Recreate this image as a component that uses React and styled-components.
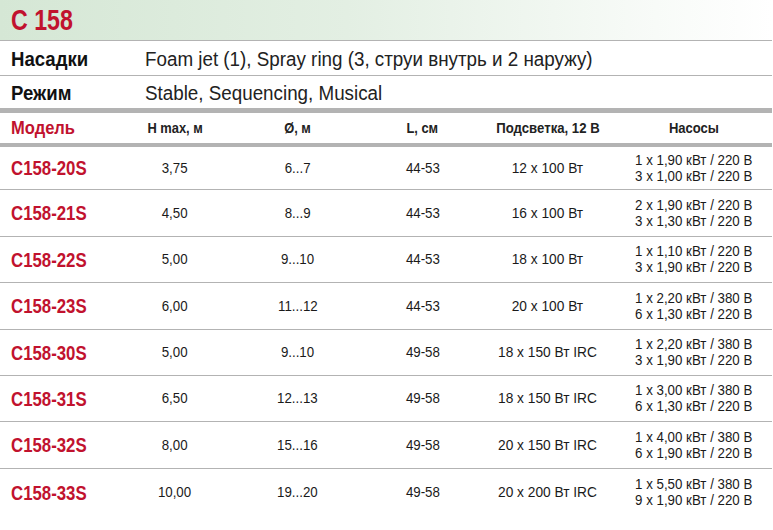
import React from 'react';
import styled, { createGlobalStyle } from 'styled-components';

const GlobalStyle = createGlobalStyle`
  body {
    margin: 0;
    background: #fff;
    font-family: "Liberation Sans", Arial, sans-serif;
    color: #111;
  }
`;

const RED = '#c1122e';
const LINE = '#b3b3b3';
const COLS = '120px 110px 135px 115px 135px 157px';

// Arial-like text squeezed horizontally to match the condensed print look
const Narrow = styled.span`
  display: inline-block;
  white-space: nowrap;
  transform: scaleX(${(p) => p.$s || 0.93});
  transform-origin: ${(p) => p.$origin || 'center'};
`;

const Sheet = styled.div`
  width: 772px;
`;

const TitleBar = styled.div`
  display: flex;
  align-items: center;
  padding-left: 11px;
  background: linear-gradient(90deg, #d5e7d5 0%, #e3efe3 45%, #f8fbf8 85%, #ffffff 100%);
  border-bottom: 1px solid ${LINE};
  box-sizing: border-box;
  height: 41px;
`;

const Title = styled.h1`
  margin: 0;
  font-size: 29px;
  font-weight: bold;
  color: ${RED};
`;

const InfoRow = styled.div`
  display: grid;
  grid-template-columns: 134px 1fr;
  align-items: center;
  height: ${(p) => p.$h}px;
  box-sizing: border-box;
  border-bottom: ${(p) => (p.$thick ? `5px solid ${LINE}` : `1px solid ${LINE}`)};
  padding-left: 11px;
  padding-top: 2px;
`;

const InfoLabel = styled.div`
  font-size: 20px;
  font-weight: bold;
  color: #111;
`;

const InfoValue = styled.div`
  font-size: 20px;
  color: #222;
`;

const Row = styled.div`
  display: grid;
  grid-template-columns: ${COLS};
  align-items: center;
  height: ${(p) => p.$h}px;
  box-sizing: border-box;
  border-bottom: ${(p) => p.$border};
`;

const ModelCell = styled.div`
  padding-left: 11px;
  font-size: ${(p) => (p.$head ? 19 : 21)}px;
  font-weight: bold;
  color: ${RED};
`;

const HeadCell = styled.div`
  text-align: center;
  font-size: 14px;
  font-weight: bold;
  color: #222;
`;

const Cell = styled.div`
  text-align: center;
  font-size: 14px;
  color: #1a1a1a;
  line-height: 15px;
`;

const PumpCell = styled(Cell)`
  display: flex;
  flex-direction: column;
  align-items: center;
  gap: 1px;
`;

const models = [
  ['C158-20S', '3,75', '6...7', '44-53', '12 x 100 Вт', ['1 x 1,90 кВт / 220 В', '3 x 1,00 кВт / 220 В']],
  ['C158-21S', '4,50', '8...9', '44-53', '16 x 100 Вт', ['2 x 1,90 кВт / 220 В', '3 x 1,30 кВт / 220 В']],
  ['C158-22S', '5,00', '9...10', '44-53', '18 x 100 Вт', ['1 x 1,10 кВт / 220 В', '3 x 1,90 кВт / 220 В']],
  ['C158-23S', '6,00', '11...12', '44-53', '20 x 100 Вт', ['1 x 2,20 кВт / 380 В', '6 x 1,30 кВт / 220 В']],
  ['C158-30S', '5,00', '9...10', '49-58', '18 x 150 Вт IRC', ['1 x 2,20 кВт / 380 В', '3 x 1,90 кВт / 220 В']],
  ['C158-31S', '6,50', '12...13', '49-58', '18 x 150 Вт IRC', ['1 x 3,00 кВт / 380 В', '6 x 1,30 кВт / 220 В']],
  ['C158-32S', '8,00', '15...16', '49-58', '20 x 150 Вт IRC', ['1 x 4,00 кВт / 380 В', '6 x 1,90 кВт / 220 В']],
  ['C158-33S', '10,00', '19...20', '49-58', '20 x 200 Вт IRC', ['1 x 5,50 кВт / 380 В', '9 x 1,90 кВт / 220 В']],
];

const heights = [43, 47, 46, 47, 46, 46, 47, 47];

export default function App() {
  return (
    <Sheet>
      <GlobalStyle />
      <TitleBar>
        <Title><Narrow $origin="left" $s={0.8}>C 158</Narrow></Title>
      </TitleBar>
      <InfoRow $h={35}>
        <InfoLabel><Narrow $origin="left">Насадки</Narrow></InfoLabel>
        <InfoValue>
          <Narrow $origin="left" $s={0.94}>Foam jet (1), Spray ring (3, струи внутрь и 2 наружу)</Narrow>
        </InfoValue>
      </InfoRow>
      <InfoRow $h={37} $thick>
        <InfoLabel><Narrow $origin="left">Режим</Narrow></InfoLabel>
        <InfoValue><Narrow $origin="left" $s={0.94}>Stable, Sequencing, Musical</Narrow></InfoValue>
      </InfoRow>
      <Row $h={34} $border={`4px solid ${LINE}`}>
        <ModelCell $head><Narrow $origin="left" $s={0.87}>Модель</Narrow></ModelCell>
        <HeadCell><Narrow $s={0.92}>H max, м</Narrow></HeadCell>
        <HeadCell><Narrow $s={0.92}>Ø, м</Narrow></HeadCell>
        <HeadCell><Narrow $s={0.92}>L, см</Narrow></HeadCell>
        <HeadCell><Narrow $s={0.94}>Подсветка, 12 В</Narrow></HeadCell>
        <HeadCell><Narrow $s={0.93}>Насосы</Narrow></HeadCell>
      </Row>
      {models.map(([name, h, d, l, light, pumps], i) => (
        <Row
          key={name}
          $h={heights[i]}
          $border={i < models.length - 1 ? `1px solid ${LINE}` : 'none'}
        >
          <ModelCell><Narrow $origin="left" $s={0.8}>{name}</Narrow></ModelCell>
          <Cell><Narrow $s={0.95}>{h}</Narrow></Cell>
          <Cell><Narrow $s={0.95}>{d}</Narrow></Cell>
          <Cell><Narrow $s={0.95}>{l}</Narrow></Cell>
          <Cell><Narrow $s={0.98}>{light}</Narrow></Cell>
          <PumpCell>
            <Narrow $s={0.95}>{pumps[0]}</Narrow>
            <Narrow $s={0.95}>{pumps[1]}</Narrow>
          </PumpCell>
        </Row>
      ))}
    </Sheet>
  );
}
